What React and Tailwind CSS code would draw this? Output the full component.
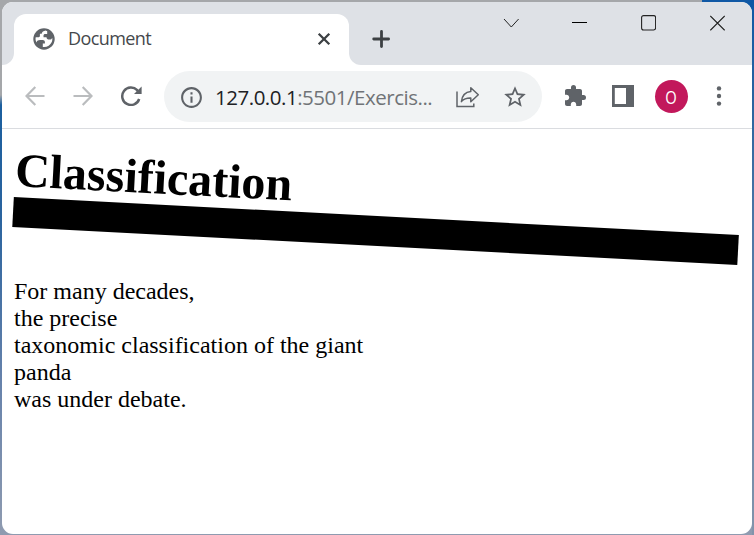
import React from "react";
import { MdExtension, MdStarBorder, MdInfoOutline } from "react-icons/md";

function Globe() {
  return (
    <svg className="ml-[19px] h-[22px] w-[22px] shrink-0" viewBox="0 0 22 22">
      <circle cx="11" cy="11" r="10.7" fill="#5f6368" />
      <path
        fill="#fff"
        d="M12.6 2.6 C10.4 3 9 4 8.7 5.8 H6.9 V8 C6.9 9 6 9.3 5 9.3 H2.7 C2.3 11.5 2.7 13 3.5 14.4 C4 12.8 5.2 12 7 12 H9.8 C11 12 11.9 12.8 11.9 14 V15.4 H9.8 V18.9 C13.5 19.5 17.2 17.5 18.8 14 C19.3 12.8 19.5 11.2 19.2 9.7 C18.8 11 17.8 11.7 16.4 11.6 C14.7 11.6 13.5 10.7 13.5 9.3 H10.5 V7.6 C10.5 6.6 11.2 6 12.2 6 H14.2 V3.2 Z"
      />
    </svg>
  );
}

function TabStrip() {
  return (
    <div className="flex h-[63px] shrink-0 bg-[#dee1e6] pt-3">
      <div className="h-3 w-3 self-end bg-white">
        <div className="h-full w-full rounded-br-full bg-[#dee1e6]" />
      </div>
      <div className="flex h-[51px] w-[335px] items-center rounded-t-[12px] bg-white pb-[2px]">
        <Globe />
        <span className="ml-[13px] w-[84px] whitespace-nowrap pb-[1px] text-[18px] leading-6 tracking-[-0.6px] text-[#45484c]">
          Document
        </span>
        <svg className="ml-[165px] mt-[1px] h-[14px] w-[14px]" viewBox="0 0 14 14" fill="none" stroke="#3c4043" strokeWidth="2.3">
          <path d="M1.7 1.7 12.3 12.3M12.3 1.7 1.7 12.3" />
        </svg>
      </div>
      <div className="h-3 w-3 self-end bg-white">
        <div className="h-full w-full rounded-bl-full bg-[#dee1e6]" />
      </div>
      <svg className="ml-[11px] mt-[16px] h-[18px] w-[18px]" viewBox="0 0 18 18" fill="none" stroke="#3c4043" strokeWidth="2.8" strokeLinecap="round">
        <path d="M9.5 1.4V16.6M1.7 9H16.6" />
      </svg>
      <div className="ml-[113px] flex h-[18px] text-[#222]">
        <svg className="h-[18px] w-[16px]" viewBox="0 0 16 18" fill="none" stroke="currentColor" strokeWidth="1">
          <path d="M1 5 8.3 13 15.6 5" />
        </svg>
        <svg className="ml-[53px] h-[18px] w-[15px]" viewBox="0 0 15 18" stroke="#000">
          <path d="M0 8.5H15" />
        </svg>
        <svg className="ml-[54px] h-[18px] w-[15px]" viewBox="0 0 15 18" fill="none" stroke="currentColor" strokeWidth="1.1">
          <rect x=".6" y="1.6" width="14" height="14.4" rx="2" />
        </svg>
        <svg className="ml-[54px] h-[18px] w-[15px]" viewBox="0 0 15 18" fill="none" stroke="currentColor" strokeWidth="1.2">
          <path d="M.3 2 14.7 16.4M14.7 2 .3 16.4" />
        </svg>
      </div>
    </div>
  );
}

function Toolbar() {
  return (
    <div className="flex h-[64px] shrink-0 items-center border-b border-[#dadce0] bg-white">
      <svg className="mb-[2px] ml-[23px] h-5 w-5" viewBox="0 0 20 20" fill="none" stroke="#babcbe" strokeWidth="2.2">
        <path d="M19.5 10H1.7M10.3 1 1.5 10 10.3 19" />
      </svg>
      <svg className="mb-[2px] ml-[28px] h-5 w-5" viewBox="0 0 20 20" fill="none" stroke="#babcbe" strokeWidth="2.2">
        <path d="M.5 10H18.3M9.7 1 18.5 10 9.7 19" />
      </svg>
      <svg className="mb-[1px] ml-[27px] h-[20px] w-[22px]" viewBox="0 0 22 20" fill="none" stroke="#5f6368" strokeWidth="2.5">
        <path d="M19.2 13A8.7 8.7 0 1 1 17.2 4.2L18.5 6" />
        <path d="M21.6 .4V8H14Z" fill="#5f6368" stroke="none" />
      </svg>
      <div className="ml-[22px] flex h-[51px] w-[378px] items-center rounded-full bg-[#f1f3f4]">
        <MdInfoOutline className="ml-[15px] mt-[1px] h-[25px] w-[25px] text-[#5f6368]" />
        <span className="ml-[11px] w-[230px] whitespace-nowrap text-[20.5px] leading-7 tracking-[-0.48px] text-[#707377]">
          <span className="text-[#202124]">127.0.0.1</span>:5501/Exercis...
        </span>
        <svg className="ml-[11px] h-[22px] w-[24px]" viewBox="0 0 24 22" fill="none" stroke="#5f6368" strokeWidth="1.5">
          <path d="M1 5.5V20.6H17.8V17.4" />
          <path d="M14.8 1.8 22.3 8.8 14.8 15.8V12.1C10.4 11.9 7.6 13.3 5.4 15.6 6 10.5 9 6 14.8 5.5Z" strokeLinejoin="round" />
        </svg>
        <MdStarBorder className="ml-[22px] h-[26px] w-[26px] text-[#5f6368]" />
      </div>
      <MdExtension className="mb-[1px] ml-[21px] h-[24px] w-[24px] text-[#5f6368]" />
      <svg className="mb-[1px] ml-[25px] h-[22px] w-[22px]" viewBox="0 0 22 22">
        <path fill="#5f6368" fillRule="evenodd" d="M0 0H22V22H0ZM2.8 3V19H14V3Z" />
      </svg>
      <div className="ml-[21px] flex h-[33px] w-[33px] items-center justify-center rounded-full bg-[#c2185b] text-[18px] leading-none text-white">
        <span className="scale-x-[.82]">O</span>
      </div>
      <svg className="mb-[1px] ml-[28px] h-[20px] w-[6px]" viewBox="0 0 6 20" fill="#5f6368">
        <circle cx="3" cy="2.4" r="2.2" />
        <circle cx="3" cy="10" r="2.2" />
        <circle cx="3" cy="17.6" r="2.2" />
      </svg>
    </div>
  );
}

const lines = ["For many decades,", "the precise", "taxonomic classification of the giant", "panda", "was under debate."];

export default function App() {
  return (
    <div className="h-[535px] w-[754px] overflow-hidden bg-[linear-gradient(to_bottom,#a5a7aa_0,#a5a7aa_95px,#1b5f9f_105px,#2b649f_220px,#6682ab_380px,#8f9bb0_535px)] font-['Open_Sans','Noto_Sans',sans-serif]">
      <div className="h-[535px] bg-[linear-gradient(to_right,transparent_702px,#0f58a5_702px)] bg-[length:100%_120px] bg-no-repeat">
        <div className="flex h-full flex-col bg-[linear-gradient(to_bottom,#0f58a5_0,#2d659f_110px,#4b75a5_220px,#8294ab_535px)] bg-[length:2px_100%] bg-[position:right_top] bg-no-repeat px-[2px] pb-[1px] pt-[2px]">
          <div className="flex h-full flex-col overflow-hidden rounded-[11px] bg-white">
            <TabStrip />
            <Toolbar />
            <main className="px-3 pt-8 font-['Liberation_Serif','Times_New_Roman',serif] text-black">
              <h1 className="h-[85px] rotate-3 border-b-[30px] border-black text-[48px] font-bold leading-[55px]">
                Classification
              </h1>
              <p className="mt-8 text-2xl leading-[27px]">
                {lines.map((line) => (
                  <span key={line} className="block">
                    {line}
                  </span>
                ))}
              </p>
            </main>
          </div>
        </div>
      </div>
    </div>
  );
}
